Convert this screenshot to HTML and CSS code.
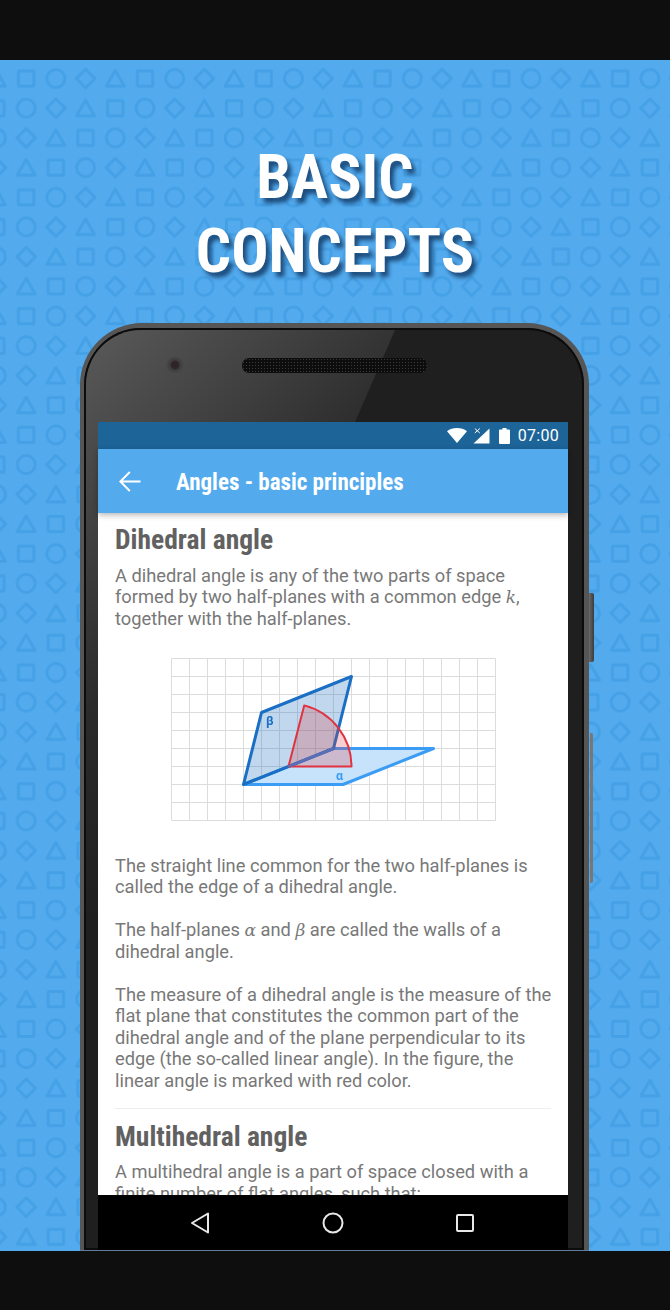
FILE: index.html
```html
<!DOCTYPE html>
<html lang="en">
<head>
<meta charset="utf-8">
<title>Basic concepts</title>
<link rel="stylesheet" href="styles.css">
</head>
<body>
<div class="stage">
  <div class="band band-top"></div>
  <main class="hero">
    <svg class="pattern" width="670" height="1191" aria-hidden="true">
      <defs>
        <g id="s0"><rect x="-7.700" y="-7.700" width="15.400" height="15.400" rx="1"/></g>
        <g id="s1"><circle r="9"/></g>
        <g id="s2"><path d="M0-9.300 9.300 0 0 9.300-9.300 0Z"/></g>
        <g id="s3"><path d="M0-8 9 7.600H-9Z"/></g>
        <pattern id="shapes" patternUnits="userSpaceOnUse" width="118.800" height="118.800" patternTransform="translate(11.350 3.650)">
          <g class="pattern-shapes">
            <use href="#s0" x="14.850" y="14.850"/><use href="#s1" x="44.550" y="14.850"/><use href="#s2" x="74.250" y="14.850"/><use href="#s3" x="103.950" y="14.850"/>
            <use href="#s1" x="14.850" y="44.550"/><use href="#s2" x="44.550" y="44.550"/><use href="#s3" x="74.250" y="44.550"/><use href="#s0" x="103.950" y="44.550"/>
            <use href="#s2" x="14.850" y="74.250"/><use href="#s3" x="44.550" y="74.250"/><use href="#s0" x="74.250" y="74.250"/><use href="#s1" x="103.950" y="74.250"/>
            <use href="#s3" x="14.850" y="103.950"/><use href="#s0" x="44.550" y="103.950"/><use href="#s1" x="74.250" y="103.950"/><use href="#s2" x="103.950" y="103.950"/>
          </g>
        </pattern>
      </defs>
      <rect width="670" height="1191" fill="url(#shapes)"/>
    </svg>

    <h1 class="headline">BASIC<br>CONCEPTS</h1>

    <div class="phone">
      <span class="side-btn side-power"></span>
      <span class="side-btn side-volume"></span>
      <div class="bezel">
        <span class="glare"></span>
        <span class="camera"></span>
        <span class="speaker"></span>
        <div class="screen">
          <div class="statusbar">
            <svg class="ic-wifi" width="20" height="15" viewBox="0 0 20 15"><path d="M10 15 0 3.200C2.700 1.100 6.200 0 10 0s7.300 1.100 10 3.200Z"/></svg>
            <svg class="ic-signal" width="17" height="16" viewBox="0 0 17 16"><path d="M16.500 0.500V15.500H0.500L9 7.500Z"/><path class="ic-x" d="M1.800 0.500 6.800 5M6.800 0.500 1.800 5"/></svg>
            <svg class="ic-battery" width="11" height="16" viewBox="0 0 11 16"><path d="M3.500 0h4v1.500H10a1 1 0 0 1 1 1V15a1 1 0 0 1-1 1H1a1 1 0 0 1-1-1V2.500a1 1 0 0 1 1-1h2.500Z"/></svg>
            <span class="clock">07:00</span>
          </div>
          <header class="appbar">
            <svg class="ic-back" width="22" height="21" viewBox="0 0 22 21"><path d="M21.500 10.500H1.500M10.800 1 1.300 10.500 10.800 20"/></svg>
            <span class="appbar-title">Angles - basic principles</span>
          </header>
          <article class="content">
            <h2 class="section-title">Dihedral angle</h2>
            <p class="copy">A dihedral angle is any of the two parts of space formed by two half-planes with a common edge <i class="math">k</i>, together with the half-planes.</p>
            <svg class="figure" width="326" height="164" viewBox="0 0 326 164">
              <path class="fig-grid" d="M.5 .5V162.500M18.500 .5V162.500M36.500 .5V162.500M54.500 .5V162.500M72.500 .5V162.500M90.500 .5V162.500M108.500 .5V162.500M126.500 .5V162.500M144.500 .5V162.500M162.500 .5V162.500M180.500 .5V162.500M198.500 .5V162.500M216.500 .5V162.500M234.500 .5V162.500M252.500 .5V162.500M270.500 .5V162.500M288.500 .5V162.500M306.500 .5V162.500M324.500 .5V162.500M.5 .5H324.500M.5 18.500H324.500M.5 36.500H324.500M.5 54.500H324.500M.5 72.500H324.500M.5 90.500H324.500M.5 108.500H324.500M.5 126.500H324.500M.5 144.500H324.500M.5 162.500H324.500"/>
              <path class="fig-alpha" d="M72.500 126.500H172L262.500 90.500H162.500Z"/>
              <path class="fig-beta" d="M72.500 126.500 90.500 54.500 180.500 18.500 162.500 90.500Z"/>
              <path class="fig-red" d="M117.500 108.500H180.500A63 63 0 0 0 133.200 47.400Z"/>
              <path class="fig-edge" d="M117.500 108.500 162.500 90.500"/>
              <text class="fig-label fig-label-b" x="95" y="67">β</text>
              <text class="fig-label fig-label-a" x="165" y="122">α</text>
            </svg>
            <p class="copy">The straight line common for the two half-planes is called the edge of a dihedral angle.</p>
            <p class="copy">The half-planes <i class="math">α</i> and <i class="math">β</i> are called the walls of a dihedral angle.</p>
            <p class="copy">The measure of a dihedral angle is the measure of the flat plane that constitutes the common part of the dihedral angle and of the plane perpendicular to its edge (the so-called linear angle). In the figure, the linear angle is marked with red color.</p>
            <hr class="rule">
            <h2 class="section-title">Multihedral angle</h2>
            <p class="copy">A multihedral angle is a part of space closed with a finite number of flat angles, such that:</p>
          </article>
          <nav class="navbar">
            <svg width="20" height="22" viewBox="0 0 20 22"><path d="M18 1.500V20.500L2 11Z"/></svg>
            <svg width="22" height="22" viewBox="0 0 22 22"><circle cx="11" cy="11" r="9.500"/></svg>
            <svg width="20" height="20" viewBox="0 0 20 20"><rect x="2" y="2" width="16" height="16" rx="1"/></svg>
          </nav>
        </div>
      </div>
    </div>
  </main>
  <div class="band band-bottom"></div>
</div>
</body>
</html>
```
FILE: styles.css
```css
* { box-sizing: border-box; }
html, body { margin: 0; padding: 0; }
body { width: 670px; height: 1310px; overflow: hidden; background: #0e0e0e; }

.stage { display: flex; flex-direction: column; width: 670px; height: 1310px; }
.band { flex: none; background: #0e0e0e; }
.band-top { height: 60px; }
.band-bottom { height: 59px; }

.hero {
  position: relative;
  flex: none;
  height: 1191px;
  overflow: hidden;
  background: #53abee;
}
.pattern { position: absolute; left: 0; top: 0; }
.pattern-shapes { fill: none; stroke: #45a0e5; stroke-width: 3; stroke-linejoin: round; }

.headline {
  position: relative;
  margin: 0;
  height: 263px;
  padding-top: 80px;
  text-align: center;
  font: 700 62px/74px Roboto, sans-serif;
  font-stretch: 75%;
  color: #fff;
  text-shadow: 4px 5px 4px rgba(20, 60, 105, .85);
}

.phone {
  position: relative;
  width: 509px;
  height: 928px;
  margin-left: 80px;
  padding: 5px 5px 0 4px;
  background: #565656;
  border-bottom: 1px solid #5f7d9a;
  border-radius: 62px 62px 0 0;
}
.side-btn { position: absolute; border-radius: 0 2px 2px 0; }
.side-power { left: 509px; top: 270px; width: 5px; height: 69px; background: linear-gradient(90deg, #6a6a6a, #3a3a3a); }
.side-volume { left: 510px; top: 410px; width: 3px; height: 150px; background: #777; }

.bezel {
  position: relative;
  height: 100%;
  padding: 94px 16px 0 14px;
  overflow: hidden;
  background: #1f1f1f;
  border-radius: 57px 57px 0 0;
  box-shadow: inset 0 0 0 2px #0c0c0c;
}
.glare {
  position: absolute;
  inset: 2px 2px 0;
  background: linear-gradient(135deg, #5a5a5a 0, #2b2b2b 27%, #1f1f1f 42%);
  clip-path: polygon(0 0, 309px 0, 0 711px);
  border-radius: 55px 55px 0 0;
}
.camera {
  position: absolute;
  left: 82px;
  top: 28px;
  width: 18px;
  height: 18px;
  border-radius: 50%;
  background: radial-gradient(circle, #2d2528 0 3.500px, #3e3c3e 5px, #4a4a4a 9px);
}
.speaker {
  position: absolute;
  left: 158px;
  top: 30px;
  width: 185px;
  height: 15px;
  border-radius: 7px;
  background: #0d0d0d radial-gradient(circle, #3a3a3a 0 .7px, transparent 1px) 0 0 / 3px 3px;
}

.screen {
  position: relative;
  display: flex;
  flex-direction: column;
  width: 470px;
  height: 828px;
  background: #fff;
}
.statusbar {
  flex: none;
  display: flex;
  align-items: center;
  justify-content: flex-end;
  height: 27px;
  padding-right: 9px;
  background: #1d6499;
}
.statusbar svg { fill: #fff; display: block; }
.ic-wifi { margin-right: 6px; }
.ic-signal { margin-right: 9px; }
.ic-x { fill: none; stroke: #fff; stroke-width: 1; }
.ic-battery { margin-right: 8px; }
.clock { font: 400 16px/20px Roboto, sans-serif; color: #fff; letter-spacing: .3px; }

.appbar {
  position: relative;
  z-index: 1;
  flex: none;
  display: flex;
  align-items: center;
  height: 64px;
  padding-left: 21px;
  background: #53abee;
  box-shadow: 0 2px 6px rgba(0, 0, 0, .3);
}
.ic-back { fill: none; stroke: #fff; stroke-width: 2; margin-right: 35px; }
.appbar-title { margin-top: 3px; font: 700 23px/28px Roboto, sans-serif; font-stretch: 75%; color: #fff; }

.content { flex: 1; min-height: 0; overflow: hidden; padding: 10px 14px 0 17px; }
.section-title {
  margin: 0 0 7.500px;
  font: 700 27.500px/34px Roboto, sans-serif;
  font-stretch: 75%;
  color: #616161;
}
.copy { margin: 0 0 21.500px; font: 400 18.300px/21.500px Roboto, sans-serif; color: #787878; }
.math { font-family: "DejaVu Serif", serif; font-size: 17px; line-height: 1; }

.figure { display: block; margin: 28.500px 0 33px 56px; filter: blur(.35px); }
.fig-grid { fill: none; stroke: #dcdcdc; stroke-width: 1; }
.fig-alpha { fill: #c6e3fb; stroke: #3b9cf4; stroke-width: 3; stroke-linejoin: round; }
.fig-beta { fill: rgba(30, 110, 190, .28); stroke: #1a6fc4; stroke-width: 3; stroke-linejoin: round; }
.fig-red { fill: rgba(225, 60, 70, .25); stroke: #e0323f; stroke-width: 2; stroke-linejoin: round; }
.fig-edge { fill: none; stroke: #5a6fb5; stroke-width: 2.500; }
.fig-label { font: 700 12.500px Roboto, sans-serif; }
.fig-label-b { fill: #1a6fc4; }
.fig-label-a { fill: #3b9cf4; }

.rule { height: 1px; margin: -5px 3px 11px 0; border: 0; background: #eeeeee; }

.navbar {
  position: relative;
  z-index: 1;
  flex: none;
  display: flex;
  align-items: center;
  height: 55px;
  padding-left: 92px;
  gap: 111.500px;
  background: #000;
}
.navbar svg { display: block; fill: none; stroke: #e8e8e8; stroke-width: 2; stroke-linejoin: round; }
```
